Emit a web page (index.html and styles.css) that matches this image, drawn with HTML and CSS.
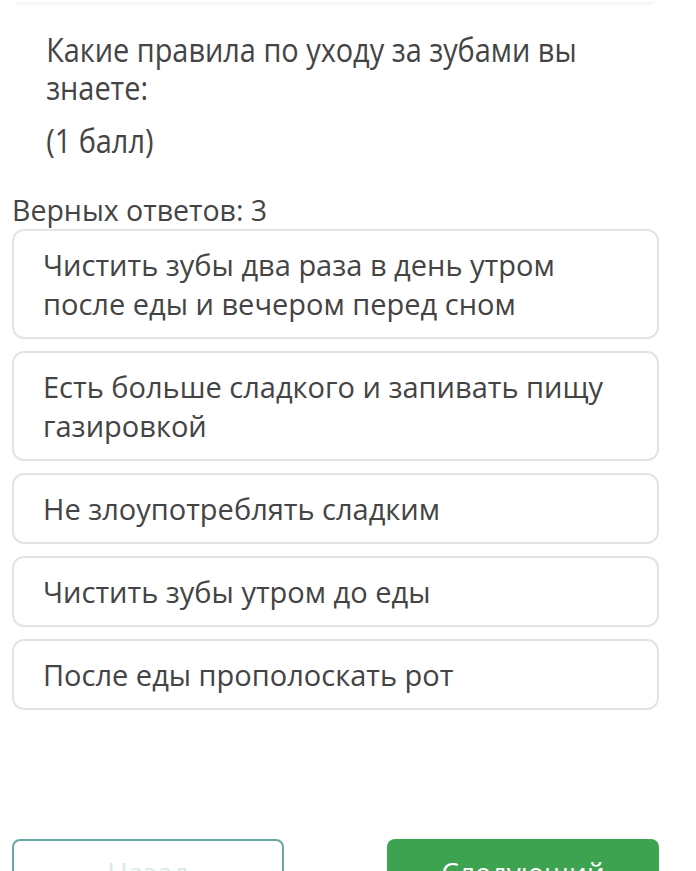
FILE: index.html
```html
<!DOCTYPE html>
<html lang="ru">
<head>
  <meta charset="UTF-8">
  <meta name="viewport" content="width=device-width, initial-scale=1.0">
  <title>Тест</title>
  <link rel="stylesheet" href="styles.css">
</head>
<body>
  <div class="prev-card"></div>

  <div class="question">
    <p class="question-text">Какие правила по уходу за зубами вы знаете:</p>
    <p class="points">(1 балл)</p>
  </div>

  <div class="answers">
    <div class="answers-count">Верных ответов: 3</div>
    <div class="option">Чистить зубы два раза в день утром после еды и вечером перед сном</div>
    <div class="option">Есть больше сладкого и запивать пищу газировкой</div>
    <div class="option">Не злоупотреблять сладким</div>
    <div class="option">Чистить зубы утром до еды</div>
    <div class="option">После еды прополоскать рот</div>
  </div>

  <div class="nav">
    <button class="btn btn-back">Назад</button>
    <button class="btn btn-next">Следующий</button>
  </div>
</body>
</html>
```

FILE: styles.css
```css
body {
  font-family: "Open Sans", "Noto Sans", sans-serif;
  font-weight: 400;
  color: #444;
  margin: 0;
  padding: 0 37px 0 12px;
  background-color: white;
}

.prev-card {
  height: 2px;
  margin: 0 4px;
  background-color: white;
  border-radius: 0 0 8px 8px;
  box-shadow: 0 1px 4px rgba(0, 0, 0, 0.12);
}

/* the question font is drawn narrower than the answers */
.question {
  padding: 29px 0 0 39px;
  transform: scaleX(0.875);
  transform-origin: left top;
}

.question-text, .points {
  margin: 0;
  font-size: 33px;
  line-height: 38px;
}

.points {
  margin-top: 15px;
}

.answers-count {
  margin-top: 31px;
  font-size: 28.5px;
  line-height: 38px;
}

.option {
  margin-bottom: 12px;
  padding: 14px 40px 14px 29px;
  border: 2px solid #e3e3e3;
  border-radius: 12px;
  font-size: 29px;
  line-height: 39px;
}

.nav {
  display: flex;
  justify-content: space-between;
  margin-top: 129px;
}

.btn {
  width: 272px;
  height: 66px;
  border-radius: 8px;
  font-family: inherit;
  font-size: 28px;
}

.btn-back {
  background-color: white;
  border: 2px solid #6aa9a3;
  color: #d6ebe8;
}

.btn-next {
  background-color: #3da351;
  border: none;
  color: white;
}
```
